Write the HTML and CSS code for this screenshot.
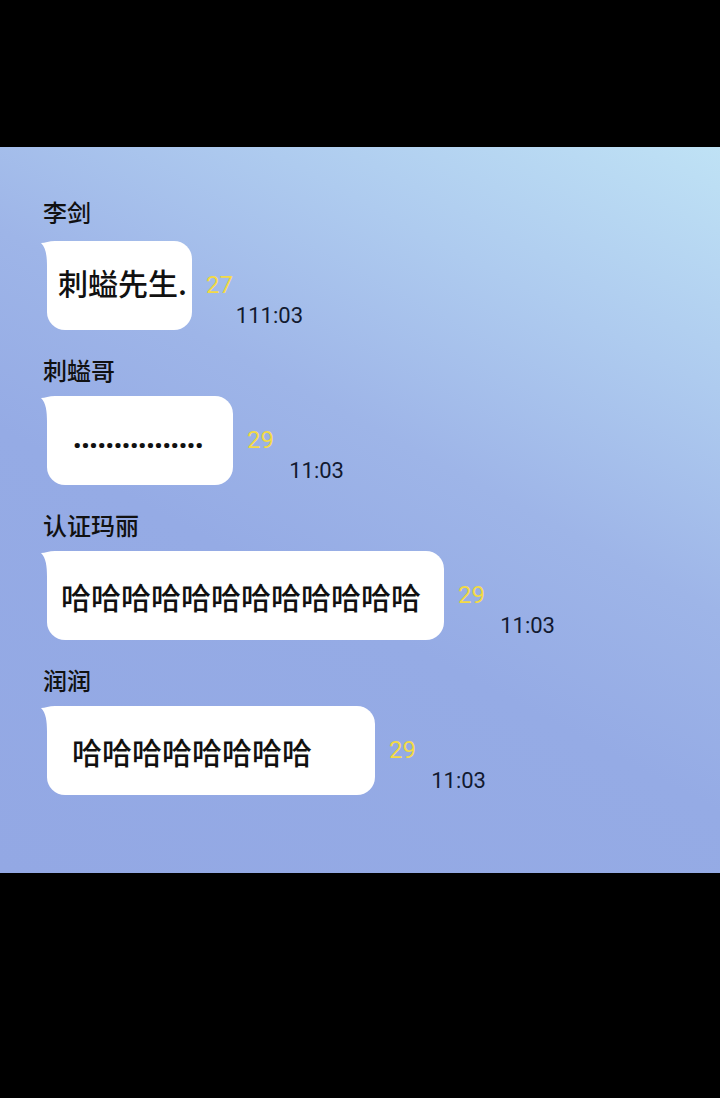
FILE: index.html
```html
<!DOCTYPE html>
<html lang="zh-CN">
<head>
<meta charset="utf-8">
<title>chat</title>
<link rel="stylesheet" href="styles.css">
</head>
<body>
<div class="top-band"></div>
<main class="panel">
  <section class="msg">
    <div class="name first">李剑</div>
    <div class="row">
      <div class="bubble b1"><span class="lift">刺螠先生.</span></div>
      <div class="meta"><span class="count">27</span><span class="time">111:03</span></div>
    </div>
  </section>
  <section class="msg">
    <div class="name">刺螠哥</div>
    <div class="row">
      <div class="bubble b2"><span class="dots">................</span></div>
      <div class="meta"><span class="count">29</span><span class="time">11:03</span></div>
    </div>
  </section>
  <section class="msg">
    <div class="name">认证玛丽</div>
    <div class="row">
      <div class="bubble b3">哈哈哈哈哈哈哈哈哈哈哈哈</div>
      <div class="meta"><span class="count">29</span><span class="time">11:03</span></div>
    </div>
  </section>
  <section class="msg">
    <div class="name">润润</div>
    <div class="row">
      <div class="bubble b4">哈哈哈哈哈哈哈哈</div>
      <div class="meta"><span class="count">29</span><span class="time">11:03</span></div>
    </div>
  </section>
</main>
</body>
</html>
```

FILE: styles.css
```css
html, body {
  margin: 0;
  padding: 0;
}
body {
  background: #000;
  width: 720px;
  height: 1098px;
  overflow: hidden;
  font-family: "Noto Sans CJK SC", "Noto Sans", sans-serif;
}
.top-band {
  height: 147px;
}
.panel {
  height: 726px;
  box-sizing: border-box;
  padding: 51px 0 0 43px;
  background:
    linear-gradient(208deg, #bfe2f5 0%, #aecbef 22%, #9eb5e8 42%, #95abe5 60%, #93a8e4 100%);
  display: flex;
  flex-direction: column;
  gap: 26px;
}
.msg {
  display: flex;
  flex-direction: column;
  gap: 12px;
}
.name {
  font-size: 24px;
  line-height: 28px;
  height: 28px;
  font-weight: 500;
  color: #111;
}
.name.first {
  margin-bottom: 3px;
}
.row {
  display: flex;
  align-items: flex-start;
  padding-left: 4px;
}
.bubble {
  position: relative;
  height: 89px;
  box-sizing: border-box;
  background: #fff;
  border-radius: 18px;
  display: flex;
  align-items: center;
  font-size: 30px;
  font-weight: 500;
  color: #111;
  white-space: nowrap;
}
.bubble::before {
  content: "";
  position: absolute;
  left: -6px;
  top: 0;
  width: 26px;
  height: 26px;
  background: #fff;
  clip-path: path('M0 2 C 4 2, 8 0, 14 0 L 26 0 L 26 26 L 6 26 C 6 15, 5 7, 0 2 Z');
}
.b1 { width: 145px; padding-left: 11px; }
.b2 { width: 186px; padding-left: 26px; }
.b3 { width: 397px; padding-left: 14px; }
.b4 { width: 328px; padding-left: 25px; }
.lift {
  position: relative;
  top: -4px;
}
.dots {
  position: relative;
  top: -4px;
  font-family: "Noto Sans", sans-serif;
  font-size: 30px;
  font-weight: 700;
  letter-spacing: -0.3px;
}
.meta {
  width: 97px;
  margin-left: 14px;
  display: flex;
  flex-direction: column;
  padding-top: 30px;
  font-family: Roboto, "Noto Sans", sans-serif;
}
.count {
  font-size: 24px;
  line-height: 28px;
  color: #f3da45;
}
.time {
  margin-top: 5px;
  font-size: 22px;
  line-height: 24px;
  color: #121a30;
  text-align: right;
}
```
